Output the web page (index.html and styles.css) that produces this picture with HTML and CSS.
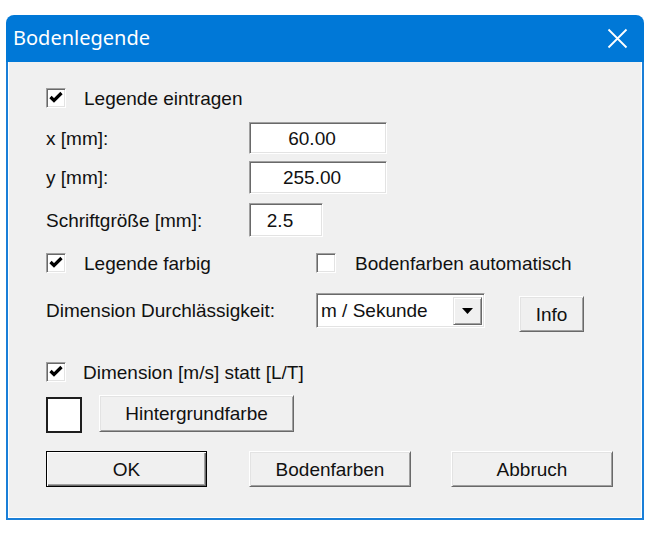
FILE: index.html
```html
<!DOCTYPE html>
<html lang="de">
<head>
<meta charset="utf-8">
<title>Bodenlegende</title>
<link rel="stylesheet" href="styles.css">
</head>
<body>
<div class="window">
  <div class="titlebar">
    <span class="title">Bodenlegende</span>
    <svg class="close" width="21" height="21" viewBox="0 0 21 21"><path d="M1.5 1.5L19.5 19.5M19.5 1.5L1.5 19.5" stroke="#fff" stroke-width="1.8" fill="none"/></svg>
  </div>
  <div class="client">
    <div class="row r1">
      <span class="cb"><svg viewBox="0 0 16 16" width="16" height="16"><polyline points="2.5,7 6,10.5 13.5,3" fill="none" stroke="#000" stroke-width="3.2"/></svg></span>
      <span class="cblabel">Legende eintragen</span>
    </div>
    <div class="row r2">
      <span class="lbl w203">x [mm]:</span>
      <span class="field num w138">60.00</span>
    </div>
    <div class="row r3">
      <span class="lbl w203">y [mm]:</span>
      <span class="field num w138">255.00</span>
    </div>
    <div class="row r4">
      <span class="lbl w203">Schriftgröße [mm]:</span>
      <span class="field num w74">2.5</span>
    </div>
    <div class="row r5">
      <div class="cell w270">
        <span class="cb"><svg viewBox="0 0 16 16" width="16" height="16"><polyline points="2.5,7 6,10.5 13.5,3" fill="none" stroke="#000" stroke-width="3.2"/></svg></span>
        <span class="cblabel">Legende farbig</span>
      </div>
      <div class="cell">
        <span class="cb"></span>
        <span class="cblabel g19">Bodenfarben automatisch</span>
      </div>
    </div>
    <div class="row r6">
      <span class="lbl w270 h35">Dimension Durchlässigkeit:</span>
      <div class="combo">
        <span class="combotext">m / Sekunde</span>
        <span class="dropbtn"><svg width="11" height="6" viewBox="0 0 11 6"><path d="M0 0H11L5.5 6Z" fill="#000"/></svg></span>
      </div>
      <span class="btn info">Info</span>
    </div>
    <div class="row r7">
      <span class="cb"><svg viewBox="0 0 16 16" width="16" height="16"><polyline points="2.5,7 6,10.5 13.5,3" fill="none" stroke="#000" stroke-width="3.2"/></svg></span>
      <span class="cblabel g17">Dimension [m/s] statt [L/T]</span>
    </div>
    <div class="row r8">
      <span class="swatch"></span>
      <span class="btn bg">Hintergrundfarbe</span>
    </div>
    <div class="row r9">
      <span class="btn default ok">OK</span>
      <span class="btn boden">Bodenfarben</span>
      <span class="btn abbruch">Abbruch</span>
    </div>
  </div>
</div>
</body>
</html>
```

FILE: styles.css
```css
html, body {
  margin: 0;
  padding: 0;
  background: #ffffff;
}
body {
  font-family: "Liberation Sans", Arial, sans-serif;
  font-size: 19px;
  color: #111;
}
.window {
  margin: 15px 0 0 6px;
  width: 638px;
}
.titlebar {
  height: 47px;
  background: #0078d7;
  border-radius: 8px 8px 0 0;
  display: flex;
  align-items: center;
  justify-content: space-between;
  padding: 0 16px 0 7px;
}
.title {
  font-family: "Noto Sans", "Open Sans", sans-serif;
  font-size: 20px;
  color: #fff;
  line-height: 1;
  margin-top: -1px;
}
.close {
  display: block;
  margin-top: -1px;
}
.client {
  background: #f0f0f0;
  border: 2px solid #1a7fd8;
  border-top: none;
  box-shadow: inset 1px 0 #ffffff, inset -1px -1px #ffffff;
  height: 456px;
  padding-left: 38px;
  box-sizing: content-box;
  display: flex;
  flex-direction: column;
  align-items: flex-start;
}
.row {
  display: flex;
  align-items: center;
  flex: none;
}
.cell {
  display: flex;
  align-items: center;
}
.r1 { margin-top: 26px; height: 20px; }
.r2 { margin-top: 14px; height: 32px; }
.r3 { margin-top: 7px; height: 33px; }
.r4 { margin-top: 9px; height: 34px; }
.r5 { margin-top: 16px; height: 20px; }
.r6 { margin-top: 20px; height: 39px; align-items: flex-start; }
.r7 { margin-top: 30px; height: 20px; }
.r8 { margin-top: 13px; height: 38px; align-items: flex-start; }
.r9 { margin-top: 18px; height: 36px; }

.lbl { display: block; line-height: 1; }
.w203 { width: 203px; flex: none; }
.w270 { width: 270px; flex: none; }
.h35 { height: 35px; display: flex; align-items: center; }

.cb {
  width: 18px;
  height: 18px;
  background: #fff;
  border-top: 1px solid #a0a0a0;
  border-left: 1px solid #a0a0a0;
  border-bottom: 1px solid #ffffff;
  border-right: 1px solid #ffffff;
  box-shadow: inset 1px 1px #696969, inset -1px -1px #e3e3e3;
  display: flex;
  align-items: center;
  justify-content: center;
  flex: none;
}
.cb svg { display: block; }
.cblabel { margin-left: 18px; line-height: 1; }
.cblabel.g19 { margin-left: 19px; }
.cblabel.g17 { margin-left: 17px; }

.field {
  box-sizing: border-box;
  height: 100%;
  background: #fff;
  border-top: 1px solid #a0a0a0;
  border-left: 1px solid #a0a0a0;
  border-bottom: 1px solid #ffffff;
  border-right: 1px solid #ffffff;
  box-shadow: inset 1px 1px #696969, inset -1px -1px #e3e3e3;
  display: flex;
  align-items: center;
  justify-content: center;
  padding-right: 12px;
  padding-top: 1px;
}
.w138 { width: 138px; }
.w74 { width: 74px; }

.combo {
  box-sizing: border-box;
  width: 169px;
  height: 35px;
  background: #fff;
  border-top: 1px solid #a0a0a0;
  border-left: 1px solid #a0a0a0;
  border-bottom: 1px solid #ffffff;
  border-right: 1px solid #ffffff;
  box-shadow: inset 1px 1px #696969, inset -1px -1px #e3e3e3;
  display: flex;
  align-items: stretch;
  padding: 3px 2px 2px 4px;
}
.combotext {
  flex: 1;
  display: flex;
  align-items: center;
}
.dropbtn {
  box-sizing: border-box;
  width: 29px;
  background: #f0f0f0;
  border-top: 1px solid #e3e3e3;
  border-left: 1px solid #e3e3e3;
  border-bottom: 1px solid #696969;
  border-right: 1px solid #696969;
  box-shadow: inset 1px 1px #ffffff, inset -1px -1px #a0a0a0;
  display: flex;
  align-items: center;
  justify-content: center;
}
.dropbtn svg { display: block; }

.btn {
  box-sizing: border-box;
  background: #f0f0f0;
  border-top: 1px solid #ffffff;
  border-left: 1px solid #ffffff;
  border-bottom: 1px solid #696969;
  border-right: 1px solid #696969;
  box-shadow: inset 1px 1px #e3e3e3, inset -1px -1px #a0a0a0;
  display: flex;
  align-items: center;
  justify-content: center;
  line-height: 1;
  flex: none;
}
.btn.default {
  border: 1px solid #000;
  box-shadow: inset 1px 1px #ffffff, inset -1px -1px #696969, inset -2px -2px #a0a0a0;
}
.info { width: 65px; height: 36px; margin-left: 34px; margin-top: 3px; }
.swatch {
  box-sizing: border-box;
  width: 36px;
  height: 36px;
  margin-top: 2px;
  background: #fff;
  border: 2px solid #1e1e1e;
  flex: none;
}
.bg { width: 195px; height: 37px; margin-left: 17px; }
.ok { width: 161px; height: 36px; }
.boden { width: 162px; height: 36px; margin-left: 42px; }
.abbruch { width: 162px; height: 36px; margin-left: 40px; }
```
